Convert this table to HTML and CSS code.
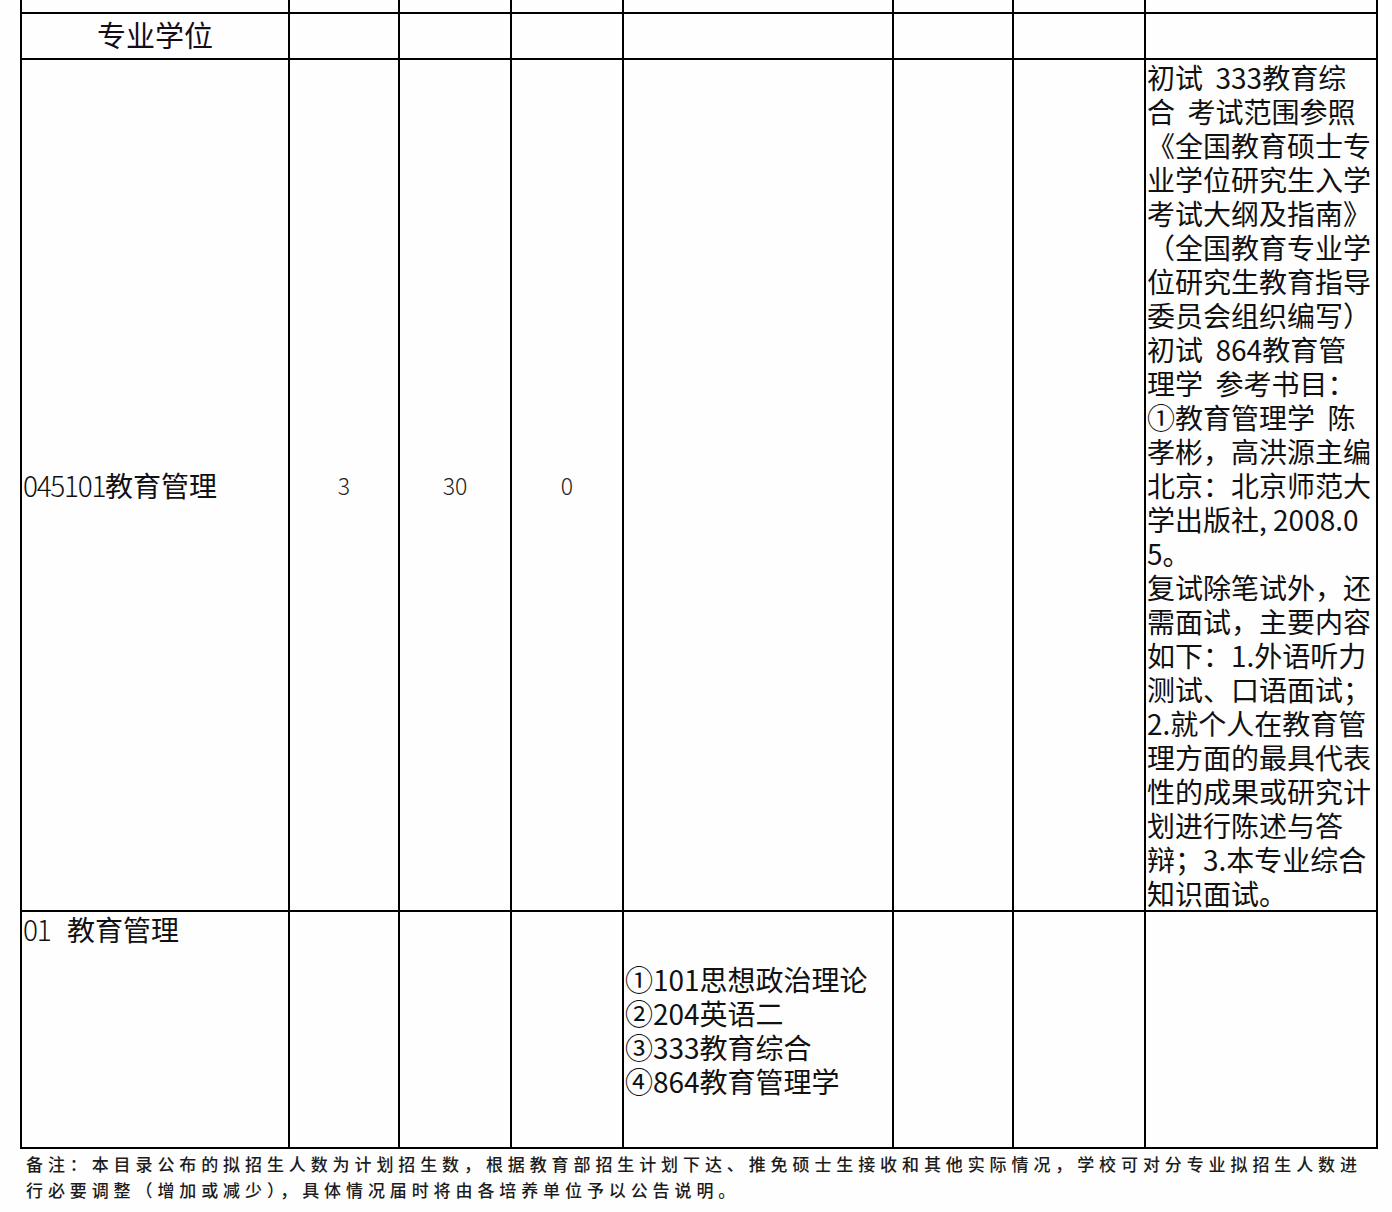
FILE: index.html
```html
<!DOCTYPE html>
<html lang="zh-CN">
<head>
<meta charset="utf-8">
<title>专业学位</title>
<link rel="stylesheet" href="styles.css">
</head>
<body>
<div class="sheet">
  <div class="c top"></div>
  <div class="c top"></div>
  <div class="c top"></div>
  <div class="c top"></div>
  <div class="c top"></div>
  <div class="c top"></div>
  <div class="c top"></div>
  <div class="c top"></div>

  <div class="c head">专业学位</div>
  <div class="c"></div>
  <div class="c"></div>
  <div class="c"></div>
  <div class="c"></div>
  <div class="c"></div>
  <div class="c"></div>
  <div class="c"></div>

  <div class="c major"><span class="code">045101</span>教育管理</div>
  <div class="c num">3</div>
  <div class="c num">30</div>
  <div class="c num">0</div>
  <div class="c"></div>
  <div class="c"></div>
  <div class="c"></div>
  <div class="c notes">初试  333教育综
合  考试范围参照
《全国教育硕士专
业学位研究生入学
考试大纲及指南》
（全国教育专业学
位研究生教育指导
委员会组织编写）
初试  864教育管
理学  参考书目：
①教育管理学  陈
孝彬，高洪源主编
北京：北京师范大
学出版社, 2008.0
5。
复试除笔试外，还
需面试，主要内容
如下：1.外语听力
测试、口语面试；
2.就个人在教育管
理方面的最具代表
性的成果或研究计
划进行陈述与答
辩；3.本专业综合
知识面试。</div>

  <div class="c dir"><span class="code dir-code">01</span>教育管理</div>
  <div class="c"></div>
  <div class="c"></div>
  <div class="c"></div>
  <div class="c exams"><div class="exam-list">①101思想政治理论
②204英语二
③333教育综合
④864教育管理学</div></div>
  <div class="c"></div>
  <div class="c"></div>
  <div class="c"></div>
</div>
<p class="note">备注：本目录公布的拟招生人数为计划招生数，根据教育部招生计划下达、推免硕士生接收和其他实际情况，学校可对分专业拟招生人数进<br>行必要调整（增加或减少），具体情况届时将由各培养单位予以公告说明。</p>
</body>
</html>
```

FILE: styles.css
```css
html, body {
  margin: 0;
  padding: 0;
  background: #fefefe;
}

body {
  font-family: "Noto Sans CJK SC", "Noto Sans", sans-serif;
  color: #111;
  width: 1392px;
  height: 1212px;
  overflow: hidden;
}

.sheet {
  display: grid;
  grid-template-columns: 268px 110px 112px 112px 270px 120px 132px 232px;
  grid-template-rows: 14px 46px 852px 237px;
  width: 1356px;
  margin-left: 20px;
  border-left: 2px solid #000;
}

.c {
  box-sizing: border-box;
  border-right: 2px solid #000;
  border-bottom: 2px solid #000;
}

.head {
  display: flex;
  align-items: center;
  justify-content: center;
  font-size: 29px;
  line-height: 34px;
  color: #140c18;
  padding-bottom: 5px;
}

.major {
  display: flex;
  align-items: center;
  padding-left: 1px;
  font-size: 28px;
  line-height: 34px;
}

.code {
  letter-spacing: -1.3px;
  font-weight: 300;
}

.dir-code {
  display: inline-block;
  width: 44px;
}

.num {
  display: flex;
  align-items: center;
  justify-content: center;
  font-size: 23px;
  line-height: 34px;
  color: #222;
  font-weight: 300;
}

.notes {
  white-space: pre;
  font-size: 28px;
  line-height: 34px;
  padding-left: 1px;
}

.dir {
  white-space: nowrap;
  font-size: 28px;
  line-height: 34px;
  padding-left: 1px;
}

.exams {
  display: flex;
  align-items: center;
  padding-left: 1px;
}

.exam-list {
  white-space: pre;
  font-size: 28px;
  line-height: 34px;
}

.note {
  margin: 0;
  padding: 2px 0 0 26px;
  font-size: 17px;
  line-height: 26px;
  letter-spacing: 4.9px;
  color: #1c1c1c;
  font-weight: 500;
  white-space: nowrap;
}
```
